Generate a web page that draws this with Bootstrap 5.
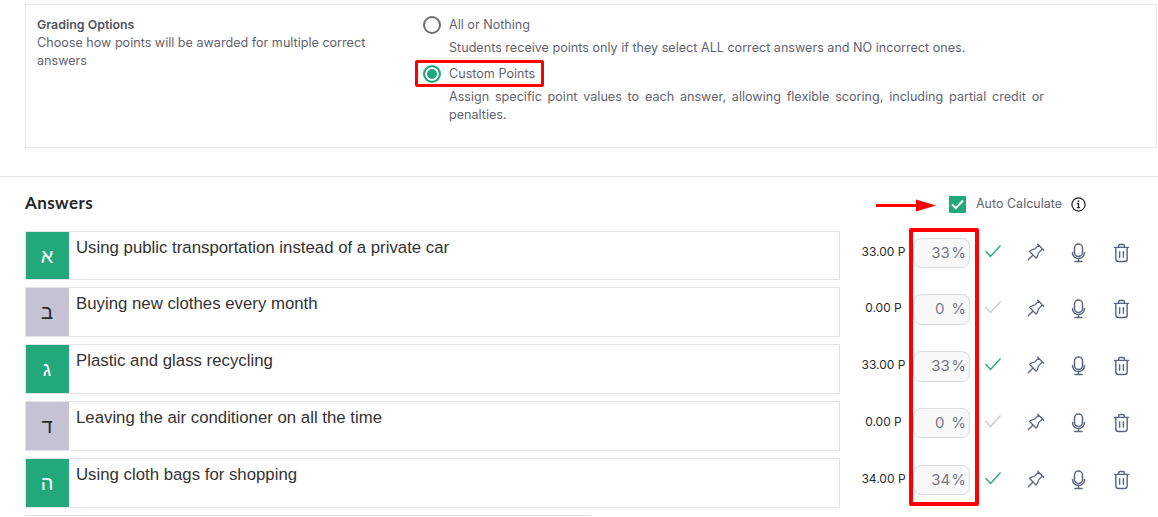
<!DOCTYPE html>
<html lang="en">
<head>
<meta charset="utf-8">
<title>Answers</title>
<link href="https://cdn.jsdelivr.net/npm/bootstrap@5.3.0/dist/css/bootstrap.min.css" rel="stylesheet">
<style>
html,body{height:517px;overflow:hidden;background:#fff}
body{font-family:"Inter",sans-serif;font-size:12.6px;color:#5f6470;position:relative}
.page-pad{padding-left:25px}
.grade-box{margin-top:4px;margin-right:1px;height:144px;border:1px solid #e6e6e9;padding:11px 11px 0;display:flex}
.grade-left{width:386px;line-height:18px;flex:none}
.grade-left h6{font:600 12.4px/18px "Inter",sans-serif;color:#50545f;margin:0}
.grade-left p{margin:0;width:340px}
.grade-right{flex:1;padding-right:101px}
.opt{display:flex;align-items:center;gap:9px;height:18px;line-height:18px}
.opt-radio{width:18px;height:18px;margin-left:-.5px;margin-right:-.5px;border:2px solid #6f6f6f;border-radius:50%;flex:none;background:#fff}
.opt-radio.on{border-color:#22a87b;box-shadow:inset 0 0 0 2px #fff;background:#22a87b}
.opt-desc{margin:5px 0 8px 26px;line-height:18px;text-align:justify}
.sep{border-top:1px solid #e6e6e9;margin-top:28px}
.ans-head{height:53.600px;padding-top:17px;display:flex;align-items:flex-start}
.ans-head h5{font:700 17px/18px "Lato",sans-serif;color:#25262b;margin:0;letter-spacing:.4px}
.auto{margin-left:auto;display:flex;align-items:center;height:18px;width:209px;gap:10px;margin-top:1px;font-size:12.5px}
.tick-box{width:17px;height:17px;background:#22a87b;border-radius:1px;display:flex;align-items:center;justify-content:center}
.info-ic{margin-left:-1px}
.answer-row{display:flex;align-items:flex-start;height:49.800px;margin-bottom:7px}
.answer-box{width:815px;height:49.800px;border:1px solid #e4e3ea;display:flex;flex:none}
.tile{width:43px;background:#22a87b;color:#fff;font:20px/46px "Liberation Sans",sans-serif;text-align:center;flex:none;padding:1px 1px 0 0}
.tile.off{background:#c5c2d4;color:#2a2a2e}
.ans-text{font:16.8px/22px "Liberation Sans",sans-serif;color:#333;padding:5px 7px}
.pts{width:86px;text-align:center;padding:13px 1px 0 2px;font-size:12px;line-height:16px;color:#2b2b30;flex:none;margin-right:-13px}
.pct{width:57px;height:30.500px;margin-top:7px;background:#f8f8f9;border:1px solid #dcdce0;border-radius:8px;flex:none;display:flex;justify-content:flex-end;align-items:center;padding-right:3px;gap:3px;font-size:15px;color:#747985}
.pct-num{width:17px;text-align:center}
.icons{display:flex;margin-left:14px;padding-top:12px;color:#5b6480}
.icons svg{display:block}
.ic{width:44px;display:flex}
.ic-check{width:42px;padding-top:1px}
.ic-check svg{color:#22a87b}
.ic-check.off svg{color:#c9c9cf}
.ic-pin{padding-left:1px}
.ic-mic{padding-left:1px;width:43px}
.last-line{position:absolute;left:25px;top:515px;width:566px;border-top:1px solid #e4e3ea}
.red-frame{position:absolute;border:4px solid #f00;border-radius:2px;pointer-events:none}
.rf-opt{left:415px;top:60px;width:129px;height:27px;border-width:3px}
.rf-pct{left:909px;top:228px;width:70px;height:278px}
.red-arrow{position:absolute;left:875px;top:199px}
</style>
</head>
<body>
<svg width="0" height="0" class="d-none">
  <symbol id="i-check" viewBox="0 0 18 16"><path d="M1.500 7l5 5.500L16.500 1.500" fill="none" stroke="currentColor" stroke-width="1.300"/></symbol>
  <symbol id="i-pin" viewBox="0 0 21 21"><path d="M12.500 1.500l7 7M13.500 2.500l-4.500 4.500-4.500 1.500-1.500 1.500 7.500 7.500 1.500-1.500 1.500-4.500 4.500-4.500M6.500 14.500l-5 5" fill="none" stroke="currentColor" stroke-width="1.500" stroke-linecap="round" stroke-linejoin="round"/></symbol>
  <symbol id="i-mic" viewBox="0 0 15 20"><g fill="none" stroke="currentColor" stroke-width="1.500" stroke-linecap="round"><rect x="3.500" y="1" width="8" height="12.500" rx="4"/><path d="M1.500 9.500a6 6 0 0 0 12 0M4 18.500h7M7.500 15.500v3"/></g></symbol>
  <symbol id="i-trash" viewBox="0 0 18 21"><path d="M1.500 4.500h15M7 9v6M11 9v6M3 4.500v12a3 3 0 0 0 3 3h6a3 3 0 0 0 3-3v-12M6 4.500V3a1.500 1.500 0 0 1 1.500-1.500h3A1.500 1.500 0 0 1 12 3v1.500" fill="none" stroke="currentColor" stroke-width="1.500" stroke-linecap="round" stroke-linejoin="round"/></symbol>
</svg>
<div class="page-pad">
  <div class="grade-box">
    <div class="grade-left">
      <h6>Grading Options</h6>
      <p>Choose how points will be awarded for multiple correct answers</p>
    </div>
    <div class="grade-right">
      <div class="opt"><span class="opt-radio"></span><span>All or Nothing</span></div>
      <div class="opt-desc">Students receive points only if they select ALL correct answers and NO incorrect ones.</div>
      <div class="opt"><span class="opt-radio on"></span><span>Custom Points</span></div>
      <div class="opt-desc">Assign specific point values to each answer, allowing flexible scoring, including partial credit or penalties.</div>
    </div>
  </div>
</div>
<div class="sep"></div>
<div class="page-pad">
  <div class="ans-head">
    <h5>Answers</h5>
    <div class="auto">
      <span class="tick-box"><svg width="13" height="11" viewBox="0 0 13 11" fill="none" stroke="#fff" stroke-width="2"><path d="M1 5.500l3.800 3.600L12 1.500"/></svg></span>
      <span>Auto Calculate</span>
      <svg class="info-ic" width="15" height="15" viewBox="0 0 15 15" fill="none" stroke="#1c1c1f"><circle cx="7.500" cy="7.500" r="6.600" stroke-width="1.200"/><path d="M7.500 6.500v4.200M6 6.500h1.500M6 10.700h3" stroke-width="1.300"/><circle cx="7.500" cy="4.200" r=".9" fill="#1c1c1f" stroke="none"/></svg>
    </div>
  </div>

  <div class="answer-row">
    <div class="answer-box"><div class="tile">א</div><div class="ans-text">Using public transportation instead of a private car</div></div>
    <div class="pts">33.00 P</div>
    <div class="pct"><span class="pct-num">33</span><span>%</span></div>
    <div class="icons">
      <div class="ic ic-check"><svg width="18" height="16"><use href="#i-check"/></svg></div>
      <div class="ic ic-pin"><svg width="18" height="18"><use href="#i-pin"/></svg></div>
      <div class="ic ic-mic"><svg width="15" height="20"><use href="#i-mic"/></svg></div>
      <div class="ic"><svg width="17" height="20"><use href="#i-trash"/></svg></div>
    </div>
  </div>
  <div class="answer-row">
    <div class="answer-box"><div class="tile off">ב</div><div class="ans-text">Buying new clothes every month</div></div>
    <div class="pts">0.00 P</div>
    <div class="pct"><span class="pct-num">0</span><span>%</span></div>
    <div class="icons">
      <div class="ic ic-check off"><svg width="18" height="16"><use href="#i-check"/></svg></div>
      <div class="ic ic-pin"><svg width="18" height="18"><use href="#i-pin"/></svg></div>
      <div class="ic ic-mic"><svg width="15" height="20"><use href="#i-mic"/></svg></div>
      <div class="ic"><svg width="17" height="20"><use href="#i-trash"/></svg></div>
    </div>
  </div>
  <div class="answer-row">
    <div class="answer-box"><div class="tile">ג</div><div class="ans-text">Plastic and glass recycling</div></div>
    <div class="pts">33.00 P</div>
    <div class="pct"><span class="pct-num">33</span><span>%</span></div>
    <div class="icons">
      <div class="ic ic-check"><svg width="18" height="16"><use href="#i-check"/></svg></div>
      <div class="ic ic-pin"><svg width="18" height="18"><use href="#i-pin"/></svg></div>
      <div class="ic ic-mic"><svg width="15" height="20"><use href="#i-mic"/></svg></div>
      <div class="ic"><svg width="17" height="20"><use href="#i-trash"/></svg></div>
    </div>
  </div>
  <div class="answer-row">
    <div class="answer-box"><div class="tile off">ד</div><div class="ans-text">Leaving the air conditioner on all the time</div></div>
    <div class="pts">0.00 P</div>
    <div class="pct"><span class="pct-num">0</span><span>%</span></div>
    <div class="icons">
      <div class="ic ic-check off"><svg width="18" height="16"><use href="#i-check"/></svg></div>
      <div class="ic ic-pin"><svg width="18" height="18"><use href="#i-pin"/></svg></div>
      <div class="ic ic-mic"><svg width="15" height="20"><use href="#i-mic"/></svg></div>
      <div class="ic"><svg width="17" height="20"><use href="#i-trash"/></svg></div>
    </div>
  </div>
  <div class="answer-row">
    <div class="answer-box"><div class="tile">ה</div><div class="ans-text">Using cloth bags for shopping</div></div>
    <div class="pts">34.00 P</div>
    <div class="pct"><span class="pct-num">34</span><span>%</span></div>
    <div class="icons">
      <div class="ic ic-check"><svg width="18" height="16"><use href="#i-check"/></svg></div>
      <div class="ic ic-pin"><svg width="18" height="18"><use href="#i-pin"/></svg></div>
      <div class="ic ic-mic"><svg width="15" height="20"><use href="#i-mic"/></svg></div>
      <div class="ic"><svg width="17" height="20"><use href="#i-trash"/></svg></div>
    </div>
  </div>
</div>
<div class="last-line"></div>
<div class="red-frame rf-opt"></div>
<div class="red-frame rf-pct"></div>
<svg class="red-arrow" width="62" height="14" viewBox="0 0 62 14"><path d="M1 5h40V.5l20 6-20 6V8H1z" fill="#f00"/></svg>
<script src="https://cdn.jsdelivr.net/npm/bootstrap@5.3.0/dist/js/bootstrap.bundle.min.js"></script>
</body>
</html>
